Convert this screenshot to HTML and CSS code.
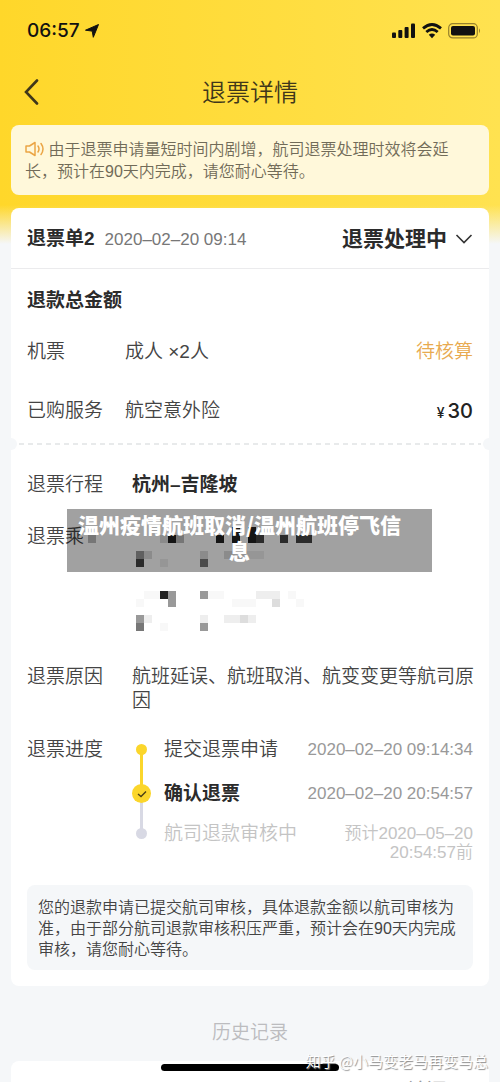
FILE: index.html
```html
<!DOCTYPE html>
<html lang="zh-CN">
<head>
<meta charset="utf-8">
<meta name="viewport" content="width=device-width, initial-scale=1">
<title>退票详情</title>
<link rel="stylesheet" href="styles.css">
</head>
<body>
<div class="screen">
  <header class="top">
    <div class="status-bar">
      <div class="clock">06:57
        <svg width="14" height="14" viewBox="0 0 14 14"><path d="M13.5.5 8.300 13.300 7.200 7.100.5 6.200Z" fill="#111" stroke="#111" stroke-linejoin="round"/></svg>
      </div>
      <div class="signals">
        <svg width="24" height="16" viewBox="0 0 24 16"><g fill="#111"><rect x="0" y="9.500" width="4" height="5.500" rx="1"/><rect x="6.300" y="7" width="4" height="8" rx="1"/><rect x="12.600" y="4" width="4" height="11" rx="1"/><rect x="19" y="0.500" width="4" height="14.500" rx="1"/></g></svg>
        <svg width="20" height="16" viewBox="0 0 20 16"><g fill="none" stroke="#111" stroke-width="2.800"><path d="M1 5.400Q10-2.400 19 5.400"/><path d="M4.300 9Q10 4 15.700 9"/></g><path d="M6.800 11.700Q10 9.200 13.200 11.700L10 15.200Z" fill="#111"/></svg>
        <svg width="33" height="16" viewBox="0 0 33 16"><rect x=".7" y=".7" width="28.600" height="14.200" rx="4" fill="none" stroke="#96812c" stroke-width="1.200"/><rect x="3" y="3" width="24" height="9.600" rx="2" fill="#111"/><path d="M31 5.300Q33 7.700 31 10.200Z" fill="#96812c"/></svg>
      </div>
    </div>
    <nav class="nav">
      <button class="back" type="button" aria-label="返回"><svg width="15" height="26" viewBox="0 0 15 26"><path d="M13 1.500 2 13 13 24.500" fill="none" stroke="#40371a" stroke-width="2.600" stroke-linecap="round"/></svg></button>
      <h1 class="title">退票详情</h1>
    </nav>
  </header>

  <main class="content">
    <p class="notice"><svg class="horn" width="20" height="16" viewBox="0 0 20 16"><g fill="none" stroke="#eba545" stroke-width="1.500" stroke-linecap="round" stroke-linejoin="round"><path d="M1 5H4.500L10 1.500V14.500L4.500 11H1Z"/><path d="M13 5Q15 8 13 11M16 2.500Q20 8 16 13.500"/></g></svg> 由于退票申请量短时间内剧增，航司退票处理时效将会延长，预计在90天内完成，请您耐心等待。</p>

    <article class="card">
      <header class="card-head">
        <h2 class="heading">退票单2</h2>
        <time class="time">2020–02–20 09:14</time>
        <button class="state" type="button">退票处理中 <svg width="18" height="12" viewBox="0 0 18 12"><path d="M1.500 2 9 9.500 16.500 2" fill="none" stroke="#333" stroke-width="1.600"/></svg></button>
      </header>
      <section class="amounts">
        <h2 class="heading">退款总金额</h2>
        <div class="row"><span class="label">机票</span><span class="value">成人 ×2人</span><span class="pending">待核算</span></div>
        <div class="row"><span class="label">已购服务</span><span class="value">航空意外险</span><span class="price"><span class="yen">¥</span>30</span></div>
      </section>
      <div class="tear"></div>
      <section class="details">
        <div class="row trip"><span class="label">退票行程</span><strong class="value">杭州–吉隆坡</strong></div>
        <div class="row passengers">
          <span class="label">退票乘</span>
          <svg class="mosaic" width="192" height="112" viewBox="0 0 192 112">
            <path fill="#222" d="M36 15h8v8h-8zM84 15h8v8h-8zM100 7h8v16h-8zM116 7h8v16h-8zM28 71h8v8h-8z"/>
            <path fill="#444" d="M124 15h8v8h-8zM148 15h8v8h-8zM164 15h16v8h-16zM4 39h8v8h-8z"/>
            <path fill="#777" d="M4 103h8v8H4zM68 39h8v8h-8z"/>
            <path fill="#999" d="M4 31h8v8H4zM36 71h8v16h-8zM68 71h8v8h-8zM4 95h8v8H4zM68 103h8v8h-8z"/>
            <path fill="#bbb" d="M-44 15h8v8h-8zM44 15h8v8h-8z"/>
            <path fill="#ddd" d="M12 31h8v8h-8zM68 31h8v8h-8zM92 31h8v8h-8zM28 15h8v8h-8zM108 95h8v8h-8zM140 79h8v8h-8z"/>
            <path fill="#eee" d="M28 39h8v8h-8zM100 31h32v8h-32zM12 95h8v8h-8zM68 95h8v8h-8zM92 95h16v8H92zM116 95h8v8h-8zM124 71h24v8h-24z"/>
            <path fill="#f8f8f8" d="M12 71h16v8H12zM4 79h8v8H4zM28 103h8v8h-8zM76 71h16v8H76zM100 79h24v8h-24zM164 79h8v8h-8zM156 71h8v8h-8z"/>
          </svg>
          <div class="caption">温州疫情航班取消/温州航班停飞信息</div>
        </div>
        <div class="row reason"><span class="label">退票原因</span><span class="value">航班延误、航班取消、航变变更等航司原因</span></div>
        <div class="row progress">
          <span class="label">退票进度</span>
          <ol class="steps">
            <li class="step done"><span class="dot"></span><span class="name">提交退票申请</span><time class="time">2020–02–20 09:14:34</time></li>
            <li class="step current"><span class="dot"><svg width="10" height="8" viewBox="0 0 10 8"><path d="M1 4 4 6.500 9 1.500" fill="none" stroke="#4a3f16" stroke-width="1.400"/></svg></span><strong class="name">确认退票</strong><time class="time">2020–02–20 20:54:57</time></li>
            <li class="step next"><span class="dot"></span><span class="name">航司退款审核中</span><time class="time">预计2020–05–20 20:54:57前</time></li>
          </ol>
        </div>
        <p class="tip">您的退款申请已提交航司审核，具体退款金额以航司审核为准，由于部分航司退款审核积压严重，预计会在90天内完成审核，请您耐心等待。</p>
      </section>
    </article>

    <h2 class="history">历史记录</h2>
    <article class="card past"><span class="past-state">已关闭</span></article>
  </main>
  <div class="home-bar"></div>
  <div class="watermark">知乎 @小马变老马再变马总</div>
</div>
</body>
</html>
```
FILE: styles.css
```css
* { box-sizing: border-box; margin: 0; padding: 0; }

body {
  font-family: "Liberation Sans", "Noto Sans CJK SC", sans-serif;
  font-size: 19px;
  line-height: 24px;
  font-weight: 350;
  color: #444;
  background: #f5f7f9;
}

button { font: inherit; color: inherit; background: none; border: 0; }
svg { flex: none; }

.screen {
  position: relative;
  height: 100vh;
  overflow: hidden;
  background:
    linear-gradient(to bottom, transparent 205px, #f5f7f9 244px),
    linear-gradient(to right, #ffd72a, #ffe250);
}

.status-bar {
  display: flex;
  justify-content: space-between;
  align-items: center;
  height: 62px;
  padding: 0 19px 0 27px;
}
.clock {
  display: flex;
  align-items: center;
  gap: 5px;
  font: 500 19px/24px Inter, sans-serif;
  color: #111;
}
.signals { display: flex; align-items: center; gap: 6px; }

.nav {
  display: grid;
  grid-template-columns: 40px 1fr 40px;
  align-items: center;
  height: 60px;
  padding: 0 24px;
}
.back { display: flex; }
.title {
  padding-top: 2px;
  font-size: 24px;
  line-height: 32px;
  font-weight: 350;
  text-align: center;
  color: #40371a;
}

.content { padding: 3px 11px 0; }

.notice {
  padding: 14px 14px 12px;
  border-radius: 8px;
  background: #fff8da;
  font-size: 16px;
  line-height: 22px;
  color: #716b58;
}
.horn { margin-right: -1px; vertical-align: -2px; }

.card {
  margin-top: 13px;
  border-radius: 8px;
  background: #fff;
}
.card-head {
  display: flex;
  align-items: center;
  gap: 10px;
  height: 61px;
  padding: 2px 16px 0;
  border-bottom: 1px solid #ebebed;
}
.heading { font-size: 19px; font-weight: 700; color: #2b2b2b; }
.time { font-size: 17px; line-height: 19px; color: #777; }
.state {
  display: flex;
  align-items: center;
  gap: 8px;
  margin-left: auto;
  font-size: 21px;
  font-weight: 700;
  color: #2b2b2b;
}

.amounts { padding: 20px 16px 18px; }
.row { display: flex; }
.label { flex: none; width: 105px; }
.amounts .row { margin-top: 27px; }
.amounts .row + .row { margin-top: 35px; }
.amounts .label { width: 98px; }
.pending, .price { margin-left: auto; }
.pending { color: #e8aa50; }
.price { font: 500 20px/24px Inter, sans-serif; color: #222; }
.yen { margin-right: 3px; font-size: 14px; }

.tear {
  position: relative;
  height: 2px;
  margin: 0 8px;
  background: repeating-linear-gradient(to right, #e8eaeb 0 5px, transparent 5px 9px);
}
.tear::before, .tear::after {
  content: "";
  position: absolute;
  top: -5px;
  width: 12px;
  height: 12px;
  border-radius: 50%;
  background: #f5f7f9;
}
.tear::before { left: -14px; }
.tear::after { right: -14px; }

.details { padding: 28px 15px 16px 16px; }
.details strong { font-weight: 700; color: #2b2b2b; }

.passengers { position: relative; margin-top: 28px; }
.mosaic { margin-top: -5px; overflow: visible; }
.caption {
  position: absolute;
  top: -16px;
  left: 40px;
  right: 42px;
  padding: 2px 30px 9px 10px;
  background: rgba(0, 0, 0, .37);
  font-family: "Noto Sans CJK SC", sans-serif;
  font-size: 21px;
  line-height: 26px;
  font-weight: 900;
  text-align: center;
  color: #fff;
}

.reason { margin-top: 33px; }
.progress { margin-top: 25px; padding-right: 1px; }
.steps { flex: 1; list-style: none; }
.step {
  position: relative;
  display: flex;
  align-items: flex-start;
  gap: 13px;
  min-height: 44px;
}
.step .name { flex: none; }
.step .time { margin: 2px 0 0 auto; text-align: right; color: #999; }
.dot {
  position: relative;
  z-index: 1;
  flex: none;
  width: 11px;
  height: 11px;
  margin: 6px 4px 0;
  border-radius: 50%;
  background: #fbd62b;
}
.current .dot {
  display: grid;
  place-items: center;
  width: 19px;
  height: 19px;
  margin: 2px 0 0;
}
.step.current { min-height: 40px; }
.step.next { min-height: 0; }
.step:not(.next)::before {
  content: "";
  position: absolute;
  top: 12px;
  left: 8px;
  width: 3px;
  height: 100%;
  background: #fbd62b;
}
.step.current::before { background: #d8d9e4; }
.next .dot { background: #d8d9e4; }
.next .name, .step.next .time { color: #c4c4c4; }
.next .time { flex: 0 1 132px; }

.tip {
  margin: 23px 1px 0 0;
  padding: 12px 11px 10px;
  border-radius: 8px;
  background: #f5f7f9;
  font-size: 16px;
  line-height: 21px;
}

.history {
  margin-top: 35px;
  font-size: 19px;
  font-weight: 350;
  text-align: center;
  color: #bcbcbf;
}
.past { margin-top: 16px; padding: 18px 42px; text-align: right; }
.past-state { font-size: 21px; color: #999; }

.home-bar {
  position: absolute;
  bottom: 11px;
  left: 50%;
  width: 178px;
  height: 7px;
  margin-left: -89px;
  border-radius: 4px;
  background: #000;
}
.watermark {
  position: absolute;
  right: 12px;
  bottom: 9px;
  font-family: "Noto Sans CJK SC", sans-serif;
  font-size: 15px;
  color: #fff;
  text-shadow: 1px 1px 1px #888;
}
```
